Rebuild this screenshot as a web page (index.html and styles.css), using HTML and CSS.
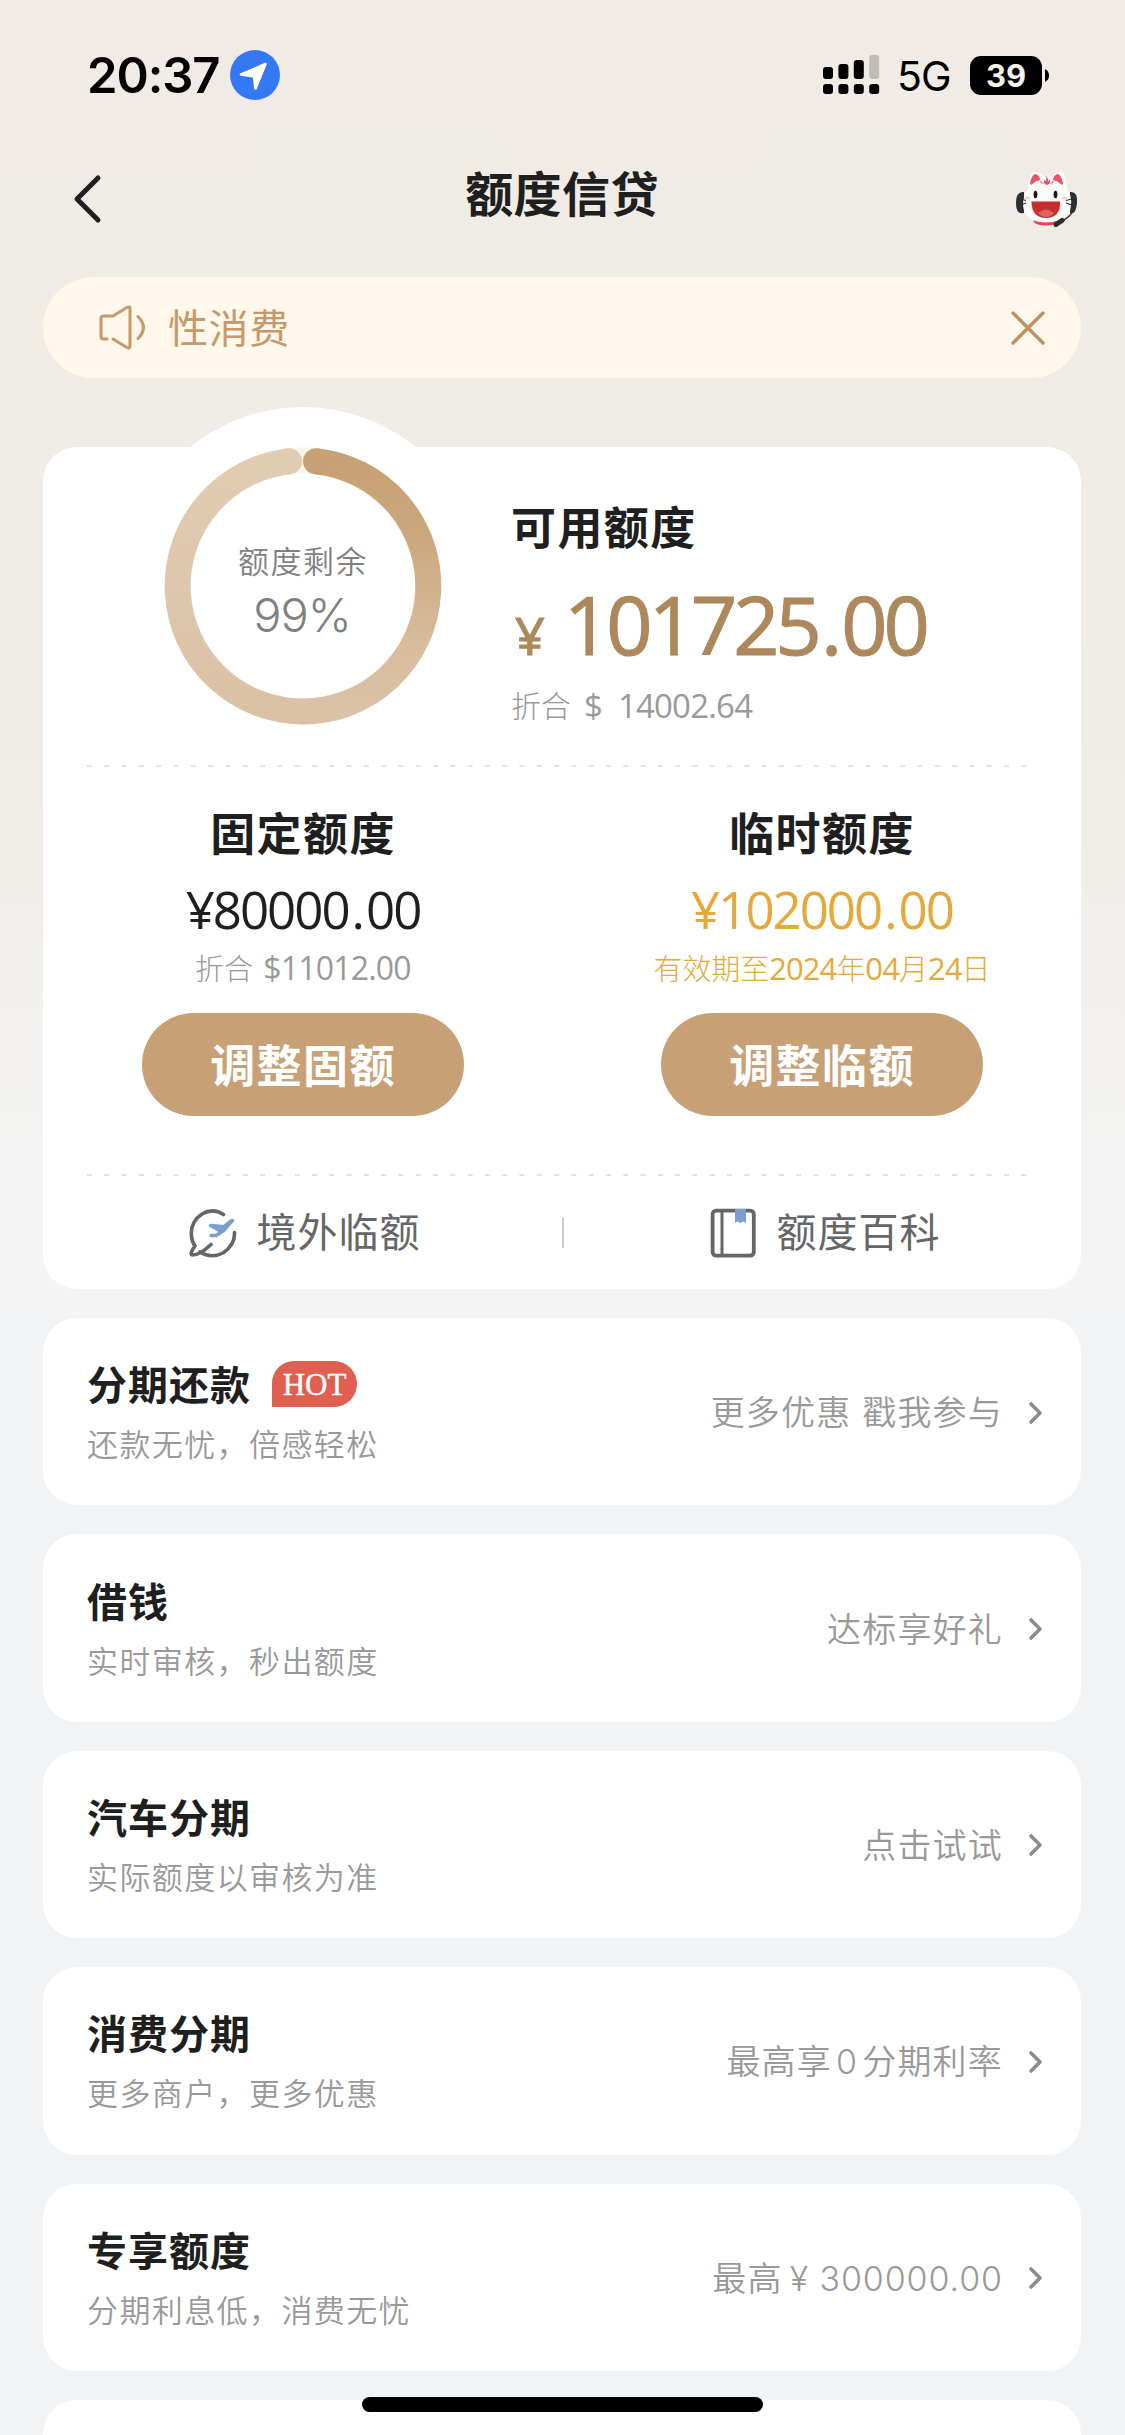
FILE: index.html
```html
<!DOCTYPE html>
<html lang="zh-CN">
<head>
<meta charset="utf-8">
<title>额度信贷</title>
<link rel="stylesheet" href="styles.css">
</head>
<body>
<div class="screen">
  <header class="status">
    <span class="clock">20:37</span>
    <svg class="locate" width="50" height="50" viewBox="0 0 50 50"><circle cx="25" cy="25" r="25" fill="#3478f6"/><path d="M11 24.5 35.500 14 25.500 38.500 24 26.500z" fill="#fff" stroke="#fff" stroke-width="2.600" stroke-linejoin="round"/></svg>
    <svg class="signal" width="57" height="40" viewBox="0 0 57 40">
      <rect x="0" y="12" width="10" height="12" rx="3"/><rect x="15.400" y="9" width="10" height="15" rx="3"/><rect x="30.800" y="5" width="10" height="19" rx="3"/><rect x="46.200" y="0" width="10" height="24" rx="3" fill="#c0bcb7"/>
      <rect x="0" y="29" width="10" height="10" rx="3"/><rect x="15.400" y="29" width="10" height="10" rx="3"/><rect x="30.800" y="29" width="10" height="10" rx="3"/><rect x="46.200" y="29" width="10" height="10" rx="3"/>
    </svg>
    <span class="network">5G</span>
    <span class="battery">39</span>
    <svg class="nub" width="4" height="13" viewBox="0 0 4 13"><path d="M0 0q4 2 4 6.500t-4 6.500z"/></svg>
  </header>

  <nav class="nav">
    <svg class="back" width="30" height="52" viewBox="0 0 30 52"><path d="M25 5 4 26l21 21" fill="none" stroke="#1f1f1f" stroke-width="5" stroke-linecap="round" stroke-linejoin="round"/></svg>
    <h1 class="nav-title">额度信贷</h1>
    <svg class="mascot" width="62" height="56" viewBox="0 0 62 56">
      <path d="M8 21Q0 20 0 32t8 10zM54 21q8-1 7 11t-7 10z" fill="#2e2e30"/>
      <path d="M12 18Q12 0 20 1q6 1 8 5 6-1 9 0 2-5 8-5 6 1 6 17 5 7 4 16Q54 51 31 52 8 51 7 34q0-9 5-16z" fill="#fdfafa"/>
      <path d="M14 12q2-9 6-9 4 2 4 6-5 1-9 5zM47 12q-2-9-6-9-4 2-4 6 5 1 9 5z" fill="#e8546a"/>
      <path d="M30.500 5q2 3 1.500 5l2-1q1 4-3 5-4-1-3-5l2 1zM24 9l4 4-3-1zM38 9l-4 4 3-1z" fill="#e8546a"/>
      <ellipse cx="19.500" cy="23.500" rx="1.900" ry="3.700" fill="#171717"/><ellipse cx="39.500" cy="23.500" rx="1.900" ry="3.700" fill="#171717"/>
      <ellipse cx="11.500" cy="27" rx="2.600" ry="1.600" fill="#f9ccd0"/><ellipse cx="48.500" cy="27" rx="2.600" ry="1.600" fill="#f9ccd0"/>
      <path d="M15.500 30.500h28.500q1 16-14 16.500-14.500-.5-14.500-16.500z" fill="#c92d2d"/><path d="M22 42q8-7 16 0-8 8-16 0z" fill="#dc6466"/>
      <path d="M17 49.500q13 4 26 0-2 5-13 5t-13-5z" fill="#e44557"/>
      <path d="M5 28l5 1.500M5 34l5-2M56 28l-6 1.500M56 34l-6-2" stroke="#333" stroke-width="1.100"/>
      <path d="M57 40Q54 46 46 50" fill="none" stroke="#2d2d2f" stroke-width="1.500"/><path d="M46 49.500l-6 4" stroke="#2d2d2f" stroke-width="5" stroke-linecap="round"/>
    </svg>
  </nav>

  <section class="notice">
    <svg width="48" height="46" viewBox="0 0 48 46" fill="none" stroke="#c49a6c" stroke-width="3" stroke-linecap="round" stroke-linejoin="round"><path d="M8 34H4.500Q2 34 2 31.500V13.500Q2 11 4.500 11H14L28 2.500q3-1.500 3 1V41q0 3-3 1.500L14 34"/><path d="M39 11.500q11 11 0 22"/></svg>
    <span class="notice-text">性消费</span>
    <svg class="close" width="36" height="36" viewBox="0 0 36 36"><path d="M3 3l30 30M33 3 3 33" stroke="#bd9162" stroke-width="3.400" stroke-linecap="round"/></svg>
  </section>

  <main class="quota card">
    <section class="summary">
      <div class="gauge">
        <svg class="gauge-ring" width="358" height="358" viewBox="0 0 358 358">
          <defs>
            <linearGradient id="right" x1="0" y1="0" x2="0" y2="1"><stop offset="0" stop-color="#c6a174"/><stop offset=".3" stop-color="#caa87e"/><stop offset=".75" stop-color="#d8bd9d"/><stop offset="1" stop-color="#dbc1a6"/></linearGradient>
            <linearGradient id="left" x1="0" y1="0" x2="0" y2="1"><stop offset="0" stop-color="#e0ccb2"/><stop offset="1" stop-color="#dbc1a6"/></linearGradient>
          </defs>
          <circle cx="179" cy="179" r="179" fill="#fff"/>
          <path d="M165 54.300q14-1.600 28 0" fill="none" stroke="#f8f4ee" stroke-width="26"/>
          <path d="M165 54.300A125.500 125.500 0 0 0 179 304.500" fill="none" stroke="url(#left)" stroke-width="26"/>
          <circle cx="165" cy="54.300" r="13" fill="#e0ccb2"/>
          <path d="M192 54.200A125.500 125.500 0 0 1 178 304.500" fill="none" stroke="url(#right)" stroke-width="26"/>
          <circle cx="192" cy="54.200" r="13" fill="#c6a174"/>
        </svg>
        <div class="gauge-label"><span class="gauge-name">额度剩余</span><span class="gauge-value">99%</span></div>
      </div>
      <div class="available">
        <h2 class="heading">可用额度</h2>
        <p class="amount"><span class="currency">¥</span><span class="amount-value">101725<span class="point">.</span>00</span></p>
        <p class="usd">折合<span class="dollar">$</span><span class="usd-value">14002.64</span></p>
      </div>
    </section>
    <svg class="rule" width="942" height="2"><path d="M1 1H942" stroke="#e2e2e2" stroke-width="2" stroke-dasharray="5 12.300"/></svg>
    <section class="limits">
      <div class="limit">
        <h2 class="heading">固定额度</h2>
        <p class="limit-value">¥80000<span class="point">.</span>00</p>
        <p class="limit-note">折合 <span class="note-num">$11012.00</span></p>
        <button class="button">调整固额</button>
      </div>
      <div class="limit">
        <h2 class="heading">临时额度</h2>
        <p class="limit-value temp">¥102000<span class="point">.</span>00</p>
        <p class="limit-note date">有效期至<b>2024</b>年<b>04</b>月<b>24</b>日</p>
        <button class="button">调整临额</button>
      </div>
    </section>
    <svg class="rule" width="942" height="2"><path d="M1 1H942" stroke="#e2e2e2" stroke-width="2" stroke-dasharray="5 12.300"/></svg>
    <section class="links">
      <a class="link">
        <svg width="48" height="50" viewBox="0 0 48 50" fill="none" stroke="#666" stroke-width="3.600" stroke-linecap="round" stroke-linejoin="round"><path d="M34.500 6.500Q24 -.5 13 6 1 14 2.500 28 3 34 6 38 0 46 3.500 47 11 47 22 36.500"/><path d="M11 44Q22 51 34 45 46 37 45.500 24.500"/><path d="M43.500 12.500 34 23 27 27.500h-5M33 18.500l-11.500-1 8 4.500" stroke="#799fcb" stroke-width="3.400"/><path d="M42 12 31 21l-2 6 7-5z" fill="#799fcb" stroke="#799fcb" stroke-width="2"/></svg>
        <span>境外临额</span>
      </a>
      <i class="divider"></i>
      <a class="link">
        <svg width="48" height="50" viewBox="0 0 48 50"><rect x="3.600" y="2.600" width="41.200" height="45" rx="3.500" fill="none" stroke="#666" stroke-width="3.800"/><path d="M13 2v46" stroke="#666" stroke-width="3"/><path d="M26 1h11v14l-2.500-1.500-3 1.500-3-1.500L26 15z" fill="#799fcb"/></svg>
        <span>额度百科</span>
      </a>
    </section>
  </main>

  <section class="list">
    <article class="item card">
      <div><h3 class="item-title">分期还款<span class="hot">HOT</span></h3><p class="item-sub">还款无忧，倍感轻松</p></div>
      <span class="item-more">更多优惠 戳我参与</span>
      <svg class="chev" width="15" height="24" viewBox="0 0 15 24"><path d="M3 3l9 9-9 9"/></svg>
    </article>
    <article class="item card">
      <div><h3 class="item-title">借钱</h3><p class="item-sub">实时审核，秒出额度</p></div>
      <span class="item-more">达标享好礼</span>
      <svg class="chev" width="15" height="24" viewBox="0 0 15 24"><path d="M3 3l9 9-9 9"/></svg>
    </article>
    <article class="item card">
      <div><h3 class="item-title">汽车分期</h3><p class="item-sub">实际额度以审核为准</p></div>
      <span class="item-more">点击试试</span>
      <svg class="chev" width="15" height="24" viewBox="0 0 15 24"><path d="M3 3l9 9-9 9"/></svg>
    </article>
    <article class="item card">
      <div><h3 class="item-title">消费分期</h3><p class="item-sub">更多商户，更多优惠</p></div>
      <span class="item-more">最高享<span class="zero">0</span>分期利率</span>
      <svg class="chev" width="15" height="24" viewBox="0 0 15 24"><path d="M3 3l9 9-9 9"/></svg>
    </article>
    <article class="item card">
      <div><h3 class="item-title">专享额度</h3><p class="item-sub">分期利息低，消费无忧</p></div>
      <span class="item-more">最高<span class="more-num">¥ 300000.00</span></span>
      <svg class="chev" width="15" height="24" viewBox="0 0 15 24"><path d="M3 3l9 9-9 9"/></svg>
    </article>
    <article class="item card"></article>
  </section>
  <div class="home-bar"></div>
</div>
</body>
</html>
```
FILE: styles.css
```css
* { box-sizing: border-box; margin: 0; padding: 0; }
body { background: #f1f3f5; }
h1, h2, h3, p { font-weight: inherit; font-size: inherit; }
svg { display: block; flex: none; }

.screen {
  position: relative;
  width: 1125px;
  height: 2435px;
  overflow: hidden;
  color: #1f1f1f;
  font-family: Inter, "Noto Sans CJK SC", sans-serif;
  white-space: nowrap;
  background: linear-gradient(180deg, #f0ebe5 0, #f0ece6 740px, #f4f4f4 1200px, #f4f4f4 1316px, #f1f3f5 1317px);
}
.card { background: #fff; border-radius: 34px; }

.status { display: flex; align-items: center; height: 150px; padding: 0 76px 0 87px; color: #000; }
.clock { width: 143px; font-weight: 600; font-size: 49px; letter-spacing: -1.1px; }
.signal { margin-left: 543px; }
.network { width: 74px; margin-left: 17px; font-size: 41px; letter-spacing: -1px; padding-top: 2px; }
.battery { width: 72px; height: 39px; margin-left: -1px; border-radius: 11px; background: #000; color: #f5f1eb; font-weight: 700; font-size: 31px; line-height: 39px; text-align: center; }
.nub { margin-left: 3px; }

.nav { display: flex; align-items: center; justify-content: space-between; height: 127px; padding: 0 47px 30px 73px; }
.nav-title { font-family: "Noto Sans CJK SC", sans-serif; font-weight: 700; font-size: 48px; line-height: 70px; margin: -15px 0 0 5px; letter-spacing: 0.4px; }

.notice { display: flex; align-items: center; height: 101px; margin: 0 44px 0 43px; padding: 0 35px 0 56px; border-radius: 51px; background: #fff7e9; }
.notice-text { margin-left: 21px; padding-top: 2px; font-size: 40px; font-weight: 400; letter-spacing: 0.6px; color: #c49a6c; line-height: 60px; }
.close { margin-left: auto; }

.quota { height: 842px; margin: 69px 44px 0 43px; }
.summary { display: flex; height: 318px; }
.gauge { display: grid; width: 358px; height: 358px; margin: -40px 29px 0 81px; }
.gauge-ring, .gauge-label { grid-area: 1 / 1; }
.gauge-label { display: flex; flex-direction: column; align-items: center; padding-top: 132px; color: #808080; }
.gauge-name { font-size: 31px; line-height: 46px; letter-spacing: 1.5px; font-weight: 350; }
.gauge-value { margin-left: -2px; font-size: 47px; line-height: 60px; font-weight: 350; letter-spacing: -1px; }
.heading { font-size: 45px; line-height: 60px; font-weight: 700; letter-spacing: 1.4px; }
.available { padding-top: 52px; }
.amount { display: flex; align-items: baseline; height: 90px; margin-top: 20px; line-height: 90px; color: #ad885c; font-family: "Open Sans", sans-serif; font-weight: 400; -webkit-text-stroke: 1.2px #ad885c; }
.currency { width: 53px; padding-left: 4px; font-size: 52px; }
.amount-value { font-size: 81px; letter-spacing: -4px; }
.point { margin: 0 3px; }
.usd { display: flex; height: 40px; margin-top: 17px; font-size: 30px; line-height: 40px; font-weight: 300; color: #999; }
.dollar { margin: 0 15px 0 13px; font: 400 33px/40px "Open Sans", sans-serif; }
.usd-value { font: 400 33px/40px "Open Sans", sans-serif; letter-spacing: -0.8px; }
.rule { margin-left: 43px; }

.limits { display: grid; grid-template-columns: 519px 519px; height: 407px; padding-top: 38px; }
.limit { display: flex; flex-direction: column; align-items: center; padding-left: 1px; }
.limit-value { height: 64px; margin-top: 12px; font: 400 51px/64px "Open Sans", sans-serif; letter-spacing: -2px; }
.temp, .date { color: #e5a93b; }
.limit-note { height: 40px; margin-top: 7px; color: #999; font-size: 29px; line-height: 40px; font-weight: 300; }
.note-num { margin-left: 2px; font-family: "Open Sans", sans-serif; font-size: 32px; font-weight: 400; letter-spacing: -0.8px; }
.limit-note.date { color: #e5a93b; font-family: "Open Sans", "Noto Sans CJK SC", sans-serif; letter-spacing: -0.1px; }
.date b { font-size: 31px; font-weight: 400; letter-spacing: -0.9px; }
.button { width: 322px; height: 103px; margin-top: 25px; padding-bottom: 2px; border: 0; border-radius: 52px; background: #c7a175; color: #fff; font: 700 45px/60px "Noto Sans CJK SC", sans-serif; letter-spacing: 1.4px; }

.links { display: grid; grid-template-columns: 519px 2px 517px; align-items: center; height: 113px; }
.link { display: flex; align-items: center; justify-content: center; gap: 20px; padding-left: 4px; font-size: 40px; line-height: 60px; letter-spacing: 1px; color: #666; }
.divider { width: 2px; height: 30px; background: #ccc; }

.list { display: flex; flex-direction: column; gap: 29px; padding: 29px 44px 0 43px; }
.item { display: flex; height: 187.4px; flex: none; align-items: center; padding: 0 38px 0 44px; }
.item-title { display: flex; align-items: center; height: 60px; margin-top: -4px; font-size: 40px; font-weight: 700; letter-spacing: 1px; }
.hot { width: 85px; height: 46px; margin: 2px 0 0 21px; border-radius: 22px 23px 23px 0; background: #df5f50; color: #fff; font: 400 31px/47px "Liberation Serif", serif; letter-spacing: 0; text-align: center; -webkit-text-stroke: 0.4px #fff; }
.item-sub { margin-top: 9px; margin-bottom: -2px; font-size: 31px; line-height: 46px; letter-spacing: 1.4px; color: #999; font-weight: 350; }
.item-more { margin-left: auto; padding-top: 3px; font-size: 34px; line-height: 50px; letter-spacing: 1.2px; color: #999; font-weight: 350; }
.zero { margin: 0 4px; }
.more-num { margin-left: 7px; letter-spacing: 0.9px; }
.chev { margin: 2px 0 0 25px; }
.chev path { fill: none; stroke: #8c8c8c; stroke-width: 3.600; stroke-linecap: round; stroke-linejoin: round; }
.home-bar { position: absolute; left: 362px; top: 2397px; width: 401px; height: 15px; border-radius: 8px; background: #000; }
```
